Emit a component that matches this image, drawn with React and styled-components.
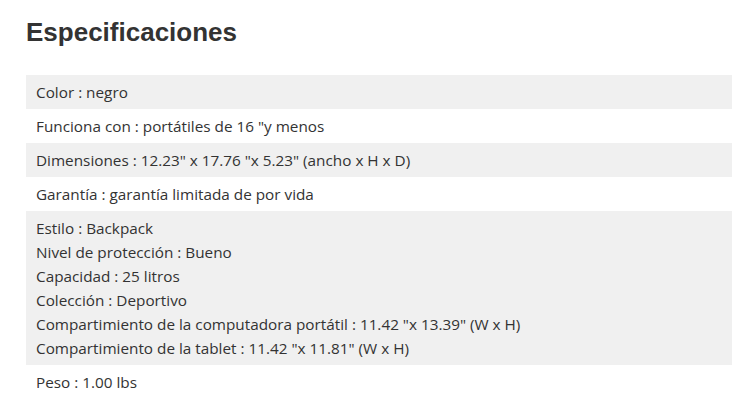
import styled, { createGlobalStyle } from "styled-components";

const GlobalStyle = createGlobalStyle`
  body {
    margin: 0;
    background: #ffffff;
  }
`;

const Wrapper = styled.section`
  padding: 17px 0 0 26px;
`;

const Title = styled.h2`
  margin: 0 0 28px;
  color: #333333;
  font-family: "Liberation Sans", Arial, sans-serif;
  font-size: 26px;
  font-weight: bold;
  line-height: 30px;
`;

const SpecList = styled.ul`
  margin: 0;
  padding: 0;
  list-style: none;
`;

const SpecRow = styled.li`
  padding: 5px 10px;
  background: ${({ striped }) => (striped ? "#f0f0f0" : "#ffffff")};
  color: #333333;
  font-family: "Open Sans", sans-serif;
  font-size: 15.3px;
  line-height: 24px;
`;

const Line = styled.div`
  white-space: nowrap;
`;

const specs = [
  ["Color : negro"],
  ['Funciona con : portátiles de 16 "y menos'],
  ['Dimensiones : 12.23" x 17.76 "x 5.23" (ancho x H x D)'],
  ["Garantía : garantía limitada de por vida"],
  [
    "Estilo : Backpack",
    "Nivel de protección : Bueno",
    "Capacidad : 25 litros",
    "Colección : Deportivo",
    'Compartimiento de la computadora portátil : 11.42 "x 13.39" (W x H)',
    'Compartimiento de la tablet : 11.42 "x 11.81" (W x H)',
  ],
  ["Peso : 1.00 lbs"],
];

export default function App() {
  return (
    <>
      <GlobalStyle />
      <Wrapper>
        <Title>Especificaciones</Title>
        <SpecList>
          {specs.map((lines, index) => (
            <SpecRow key={index} striped={index % 2 === 0}>
              {lines.map((line) => (
                <Line key={line}>{line}</Line>
              ))}
            </SpecRow>
          ))}
        </SpecList>
      </Wrapper>
    </>
  );
}
